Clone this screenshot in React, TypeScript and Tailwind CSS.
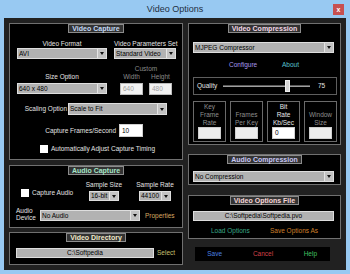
import React from "react";

function Arrow() {
  return (
    <div className="w-[9px] h-full border-l border-[#e4e4e4] bg-[#c2c2c2] flex items-center justify-center shrink-0">
      <div className="w-0 h-0 border-l-[2.5px] border-r-[2.5px] border-t-[3px] border-l-transparent border-r-transparent border-t-[#111]" />
    </div>
  );
}

function Drop({ cls, text }: { cls: string; text: string }) {
  return (
    <div className={`flex items-center bg-[#b2b2b2] border border-[#dedede] ${cls}`}>
      <div className="flex-1 pl-[1px] text-[6.5px] leading-[8px] text-black whitespace-nowrap overflow-hidden">{text}</div>
      <Arrow />
    </div>
  );
}

function Title({ text, color }: { text: string; color: string }) {
  return (
    <div className={`self-center h-[9px] px-[3px] border border-[#8c8c8c] bg-[#333333] flex items-center text-[7px] font-bold leading-[7px] whitespace-nowrap ${color}`}>
      {text}
    </div>
  );
}

function Box({ lines, active, value }: { lines: string[]; active?: boolean; value?: string }) {
  return (
    <div className="w-[33px] h-[41px] border border-[#6a6a6a] flex flex-col items-center pt-[1px]">
      <div className={`h-[24px] flex flex-col justify-end items-center text-[6.5px] leading-[8px] ${active ? "text-[#e8e8e8]" : "text-[#8e8e8e]"}`}>
        {lines.map((l, i) => (
          <div key={i} className="whitespace-nowrap">{l}</div>
        ))}
      </div>
      <div className={`w-[23px] h-[12px] border border-[#cfcfcf] flex items-center pl-[2px] text-[6.5px] text-black ${active ? "bg-white" : "bg-[#ececec]"}`}>
        {value}
      </div>
    </div>
  );
}

export default function App() {
  return (
    <div className="w-[350px] h-[274px] bg-[#98c9f2] flex flex-col font-['Liberation_Sans',Arial,sans-serif] overflow-hidden">
      <div className="h-[18px] flex items-center shrink-0">
        <div className="w-[17px]" />
        <div className="flex-1 text-center text-[9px] leading-[10px] text-[#1f2f3f]">Video Options</div>
        <div className="w-[11px] h-[11px] mr-[6px] bg-[#c75050] flex items-center justify-center text-white text-[7px] leading-[7px] font-bold">x</div>
      </div>
      <div className="mx-[4px] h-[252px] bg-[#212121] flex pt-[5px] pl-[5px] gap-[5px] text-[#e4e4e4] text-[6.5px] leading-[8px]">
        {/* Left column */}
        <div className="w-[174px] flex flex-col">
          {/* Video Capture */}
          <div className="h-[137px] border border-[#707070] bg-black flex flex-col">
            <Title text="Video Capture" color="text-[#c4daf6]" />
            <div className="mt-[6px] flex pl-[7px] gap-[7px]">
              <div className="w-[90px] flex flex-col">
                <div className="h-[9px] leading-[9px] text-center">Video Format</div>
                <Drop cls="w-[90px] h-[11px]" text="AVI" />
              </div>
              <div className="w-[62px] flex flex-col">
                <div className="h-[9px] leading-[9px] text-center whitespace-nowrap">Video Parameters Set</div>
                <Drop cls="w-[62px] h-[11px]" text="Standard Video" />
              </div>
            </div>
            <div className="mt-[6px] flex pl-[7px]">
              <div className="w-[90px] flex flex-col mt-[8px]">
                <div className="h-[8px] text-center">Size Option</div>
                <div className="mt-[2px]">
                  <Drop cls="w-[90px] h-[11px]" text="640 x 480" />
                </div>
              </div>
              <div className="ml-[13px] w-[52px] flex flex-col text-[#8a8a8a]">
                <div className="h-[8px] text-center">Custom</div>
                <div className="flex gap-[6px]">
                  <div className="w-[23px] flex flex-col">
                    <div className="h-[8px] text-center">Width</div>
                    <div className="mt-[2px] h-[12px] bg-[#f2f2f2] border border-[#bdbdbd] flex items-center pl-[2px] text-[#a0a0a0]">640</div>
                  </div>
                  <div className="w-[23px] flex flex-col">
                    <div className="h-[8px] text-center">Height</div>
                    <div className="mt-[2px] h-[12px] bg-[#f2f2f2] border border-[#bdbdbd] flex items-center pl-[2px] text-[#a0a0a0]">480</div>
                  </div>
                </div>
              </div>
            </div>
            <div className="mt-[8px] flex items-center">
              <div className="w-[57px] text-right whitespace-nowrap">Scaling Option</div>
              <div className="ml-[1px]">
                <Drop cls="w-[99px] h-[12px]" text="Scale to Fit" />
              </div>
            </div>
            <div className="mt-[9px] flex items-center">
              <div className="w-[106px] text-right whitespace-nowrap">Capture Frames/Second</div>
              <div className="ml-[3px] w-[24px] h-[13px] bg-white border border-[#cfcfcf] flex items-center pl-[2px] text-black">10</div>
            </div>
            <div className="mt-[8px] flex items-center pl-[30px]">
              <div className="w-[8px] h-[8px] bg-white" />
              <div className="ml-[3px] whitespace-nowrap">Automatically Adjust Capture Timing</div>
            </div>
          </div>
          {/* Audio Capture */}
          <div className="mt-[5px] h-[63px] border border-[#707070] bg-black flex flex-col">
            <Title text="Audio Capture" color="text-[#a6e6c8]" />
            <div className="mt-[6px] flex pl-[11px]">
              <div className="w-[65px] mt-[8px] flex items-center self-start">
                <div className="w-[8px] h-[8px] bg-white" />
                <div className="ml-[3px] whitespace-nowrap">Capture Audio</div>
              </div>
              <div className="w-[36px] flex flex-col items-center">
                <div className="h-[8px] whitespace-nowrap">Sample Size</div>
                <div className="mt-[2px]">
                  <Drop cls="w-[30px] h-[10px]" text="16-bit" />
                </div>
              </div>
              <div className="ml-[15px] w-[36px] flex flex-col items-center">
                <div className="h-[8px] whitespace-nowrap">Sample Rate</div>
                <div className="mt-[2px]">
                  <Drop cls="w-[32px] h-[10px]" text="44100" />
                </div>
              </div>
            </div>
            <div className="mt-[6px] flex items-end pl-[6px]">
              <div className="w-[20px] leading-[7px]">
                <div>Audio</div>
                <div>Device</div>
              </div>
              <div className="ml-[4px]">
                <Drop cls="w-[100px] h-[11px]" text="No Audio" />
              </div>
              <div className="ml-[5px] mb-[1.5px] text-[#d8a860] whitespace-nowrap">Properties</div>
            </div>
          </div>
          {/* Video Directory */}
          <div className="mt-[4px] h-[33px] border border-[#707070] bg-black flex flex-col">
            <Title text="Video Directory" color="text-[#f0e8c8]" />
            <div className="mt-[6px] flex items-center pl-[6px]">
              <div className="w-[138px] h-[10px] bg-[#b2b2b2] border border-[#dedede] flex items-center justify-center text-black">C:\Softpedia</div>
              <div className="ml-[3px] text-[#c8c070]">Select</div>
            </div>
          </div>
        </div>
        {/* Right column */}
        <div className="w-[153px] flex flex-col">
          {/* Video Compression */}
          <div className="h-[122px] border border-[#707070] bg-black flex flex-col">
            <Title text="Video Compression" color="text-[#f2d8e6]" />
            <div className="mt-[9px] ml-[4px]">
              <Drop cls="w-[141px] h-[11px]" text="MJPEG Compressor" />
            </div>
            <div className="mt-[8px] h-[8px] flex ml-[40px]">
              <div className="w-[53px] text-[#a898ee]">Configure</div>
              <div className="text-[#58c4d0]">About</div>
            </div>
            <div className="mt-[8px] ml-[4px] w-[144px] h-[18px] border border-[#5e5e5e] flex items-center pl-[3px]">
              <div className="w-[26px]">Quality</div>
              <div className="relative w-[87px] h-[12px] flex items-center">
                <div className="w-full h-[2px] bg-[#a0a0a0] border-t border-[#5a5a5a]" />
                <div className="absolute left-[62px] top-0 w-[5px] h-[12px] bg-[#d6d6d6] border border-[#f0f0f0]" />
              </div>
              <div className="ml-[8px]">75</div>
            </div>
            <div className="mt-[6px] ml-[4px] flex gap-[4px]">
              <Box lines={["Key", "Frame", "Rate"]} />
              <Box lines={["Frames", "Per Key"]} />
              <Box lines={["Bit", "Rate", "Kb/Sec"]} active value="0" />
              <Box lines={["Window", "Size"]} />
            </div>
          </div>
          {/* Audio Compression */}
          <div className="mt-[9px] h-[31px] border border-[#707070] bg-black flex flex-col">
            <Title text="Audio Compression" color="text-[#c8c8f6]" />
            <div className="mt-[7px] ml-[4px]">
              <Drop cls="w-[141px] h-[11px]" text="No Compression" />
            </div>
          </div>
          {/* Video Options File */}
          <div className="mt-[10px] h-[44px] border border-[#707070] bg-black flex flex-col">
            <Title text="Video Options File" color="text-[#f6d6d6]" />
            <div className="mt-[6px] ml-[4px] w-[141px] h-[10px] bg-[#b2b2b2] border border-[#dedede] flex items-center justify-center text-black whitespace-nowrap">
              C:\Softpedia\Softpedia.pvo
            </div>
            <div className="mt-[6px] h-[8px] flex ml-[22px]">
              <div className="w-[59px] text-[#3aa888] whitespace-nowrap">Load Options</div>
              <div className="text-[#d0802a] whitespace-nowrap">Save Options As</div>
            </div>
          </div>
          {/* Buttons */}
          <div className="mt-[8px] ml-[7px] w-[135px] h-[14px] bg-black flex items-center">
            <div className="w-[40px] text-center text-[#4a80e0]">Save</div>
            <div className="ml-[9px] w-[40px] text-center text-[#d04048]">Cancel</div>
            <div className="ml-[8px] w-[40px] text-center text-[#40c060]">Help</div>
          </div>
        </div>
      </div>
    </div>
  );
}
